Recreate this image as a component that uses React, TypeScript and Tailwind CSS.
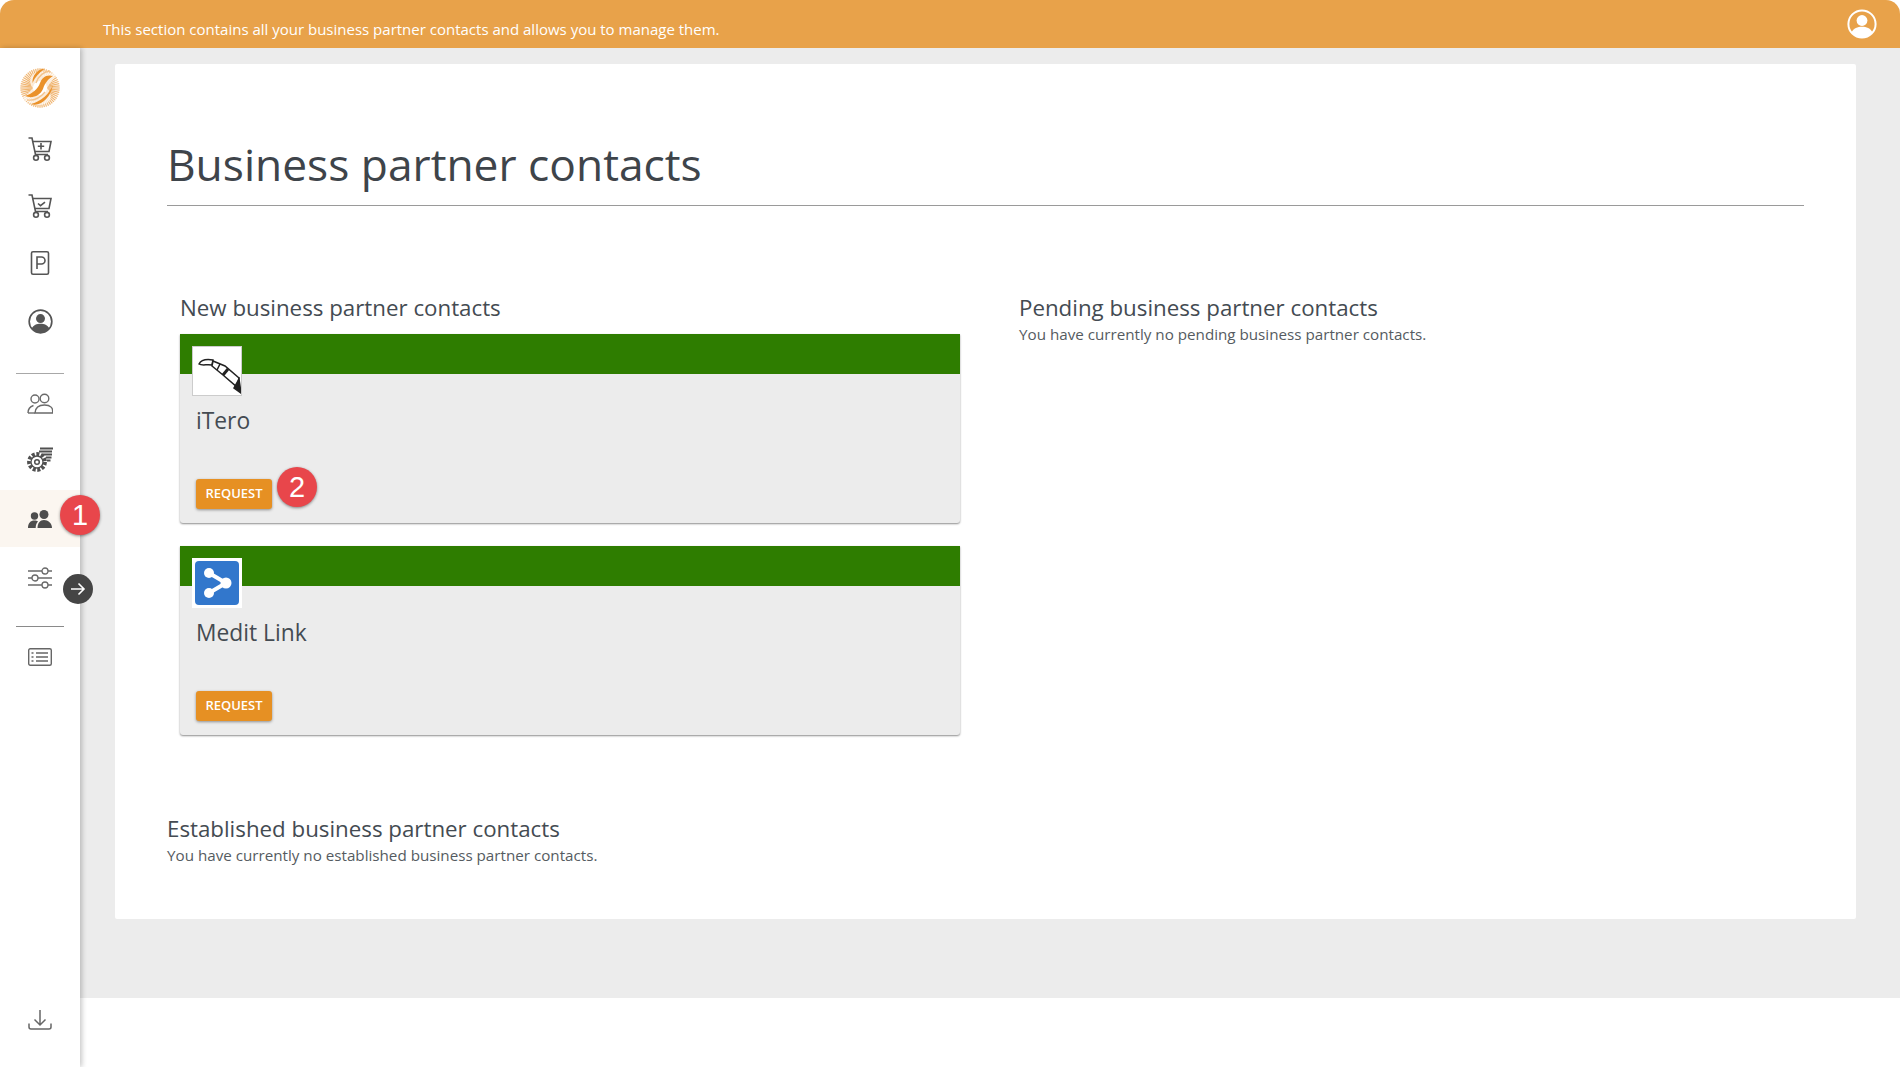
const textFont = "font-['Open_Sans','Noto_Sans',sans-serif]"

function CartPlus() {
  return (
    <svg width="24" height="24" viewBox="0 0 24 24" fill="none" stroke="#555555" strokeWidth="1.600">
      <path d="M0.500 1h3.500l3.500 16.500h12.500" />
      <path d="M4.500 4.500h18.500l-2 10H7" />
      <path d="M13 6v6.500M9.800 9.300h6.400" />
      <circle cx="8" cy="20.800" r="2.400" />
      <circle cx="19" cy="20.800" r="2.400" />
    </svg>
  )
}

function CartCheck() {
  return (
    <svg width="24" height="24" viewBox="0 0 24 24" fill="none" stroke="#555555" strokeWidth="1.600">
      <path d="M0.500 1h3.500l3.500 16.500h12.500" />
      <path d="M4.500 4.500h18.500l-2 10H7" />
      <path d="M10 9.500l2.500 2.200 4.500-3.500" />
      <circle cx="8" cy="20.800" r="2.400" />
      <circle cx="19" cy="20.800" r="2.400" />
    </svg>
  )
}

function ParkIcon() {
  return (
    <svg width="20" height="24" viewBox="0 0 20 24" fill="none" stroke="#555555" strokeWidth="1.600">
      <rect x="1.500" y="0.800" width="17" height="22.400" rx="1.500" />
      <path d="M7 18V6h4.500a3.500 3.500 0 0 1 0 7H7" />
    </svg>
  )
}

function UserCircle({ color, size }: { color: string; size: number }) {
  return (
    <svg width={size} height={size} viewBox="0 0 30 30">
      <circle cx="15" cy="15" r="13.600" fill="none" stroke={color} strokeWidth="2" />
      <circle cx="15" cy="11.500" r="5.400" fill={color} />
      <path d="M4.500 23.500c2-4.500 6-5.800 10.500-5.800s8.500 1.300 10.500 5.800a13.600 13.600 0 0 1-21 0z" fill={color} />
    </svg>
  )
}

function PeopleOutline() {
  return (
    <svg width="26" height="22" viewBox="0 0 26 22" fill="none" stroke="#6a6a6a" strokeWidth="1.400">
      <circle cx="8" cy="6" r="4" />
      <circle cx="17.500" cy="5.500" r="4.300" />
      <path d="M1 20c0-4 2-6.500 5.500-7.500M8 20c.3-5 3.500-8 9.500-8s9 3 8 8z" />
      <path d="M1 20h7" />
    </svg>
  )
}

function GearStack() {
  return (
    <svg width="28" height="26" viewBox="0 0 28 26" fill="none" stroke="#505050">
      <circle cx="11" cy="15" r="8" strokeWidth="3.800" strokeDasharray="3 1.600" />
      <circle cx="11" cy="15" r="6" strokeWidth="1.300" />
      <circle cx="11" cy="15" r="2.300" strokeWidth="1.500" />
      <path d="M14 1.500h13M13 4.500h13M16 7.500h10M20 10.500h5.500M21 13.500h3.500" strokeWidth="2.200" />
    </svg>
  )
}

function PeopleSolid() {
  return (
    <svg width="24" height="18" viewBox="0 0 24 18" fill="#4d4d4d">
      <circle cx="6.500" cy="6" r="3.700" />
      <circle cx="16" cy="4.500" r="4.500" />
      <path d="M0 18c0-5 2.500-7.500 6.500-7.500 1.500 0 2.500.3 3.500 1-1.500 1.500-2.300 3.800-2.300 6.500z" />
      <path d="M9.500 18c0-5 2.500-8 6.500-8s8 3 8 8z" />
    </svg>
  )
}

function Sliders() {
  return (
    <svg width="24" height="22" viewBox="0 0 24 22" fill="none" stroke="#6a6a6a" strokeWidth="1.300">
      <path d="M0 4h14M20 4h4M0 11h4M10 11h14M0 18h14M20 18h4" />
      <circle cx="17" cy="4" r="3" />
      <circle cx="7" cy="11" r="3" />
      <circle cx="17" cy="18" r="3" />
    </svg>
  )
}

function ListBox() {
  return (
    <svg width="24" height="18" viewBox="0 0 24 18" fill="none" stroke="#666666" strokeWidth="1.400">
      <rect x="0.700" y="0.700" width="22.600" height="16.600" rx="1.500" />
      <path d="M8 5h12M8 9h12M8 13h12" />
      <path d="M3.500 5h2M3.500 9h2M3.500 13h2" />
    </svg>
  )
}

function Download() {
  return (
    <svg width="24" height="22" viewBox="0 0 24 22" fill="none" stroke="#666666" strokeWidth="1.500">
      <path d="M12 1v15M6.500 10.500l5.500 5.500 5.500-5.500" />
      <path d="M1 14.500v3.500a2 2 0 0 0 2 2h18a2 2 0 0 0 2-2v-3.500" />
    </svg>
  )
}

function SwirlLogo() {
  const rays = Array.from({ length: 56 }, (_, i) => (i * 360) / 56)
  return (
    <svg width="40" height="40" viewBox="0 0 40 40">
      {rays.map((a) => (
        <path key={a} d="M20 13L20 0.300" stroke="#f0b673" strokeWidth="1.200" transform={`rotate(${a} 20 20)`} />
      ))}
      <path d="M36 7C26 2 15 2 11 9C9 14 11 18 13 20C9 24 7 27 3 30C10 38 24 40 30 32C32 28 30 23 27 20C30 15 33 11 36 7Z" fill="#ffffff" opacity="0.700" />
      <path d="M33 8C26 6 22 10 20 15C18 21 12 26 5 28C12 31 20 28 23 21C25 15 28 11 33 8Z" fill="#ea9129" />
      <path d="M25 0.500C18 1 12 7 12.500 15C15 9 19 5 25 0.500Z" fill="#ea9129" />
      <path d="M11 36C20 39 30 31 33 17C29 26 22 33 11 36Z" fill="#ea9129" />
      <path d="M30 3C23 4 18 9 16 15M7 32C14 33 20 30 25 24" fill="none" stroke="#f3c38c" strokeWidth="1.300" />
    </svg>
  )
}

function IteroIcon() {
  return (
    <svg width="48" height="48" viewBox="0 0 48 48" fill="none" stroke="#222222" strokeWidth="1.500">
      <path d="M6 17C8 13 14 12 20 13L19 18C14 17 9 19 6 17Z" />
      <path d="M20 14L32 19L46 31L44 40L30 28L19 19Z" fill="#ffffff" />
      <path d="M27 17L24 23" strokeWidth="1.500" />
      <path d="M35 22L30 28" strokeWidth="3" />
      <path d="M46 32L48 46L41 41Z" fill="#222222" />
    </svg>
  )
}

function MeditIcon() {
  return (
    <svg width="44" height="44" viewBox="0 0 44 44">
      <rect x="0" y="0" width="44" height="44" rx="4" fill="#3277cc" />
      <path d="M14 12L31 22L14 32" fill="none" stroke="#ffffff" strokeWidth="4" />
      <circle cx="14" cy="12" r="5" fill="#ffffff" />
      <circle cx="31" cy="22" r="5.500" fill="#ffffff" />
      <circle cx="14" cy="32" r="5" fill="#ffffff" />
    </svg>
  )
}

function Badge({ n, className }: { n: number; className: string }) {
  return (
    <div
      className={`absolute w-10 h-10 rounded-full bg-[#e8464b] text-white text-[29px] leading-none flex items-center justify-center shadow-[0_1px_3px_rgba(0,0,0,0.45)] font-['Liberation_Sans',sans-serif] ${className}`}
    >
      {n}
    </div>
  )
}

function PartnerCard({ name, icon, light, badge }: { name: string; icon: React.ReactNode; light: boolean; badge?: boolean }) {
  return (
    <div className="relative w-[780px] h-[189px] bg-[#ececec] rounded-b-[3px] shadow-[0_1px_2px_rgba(0,0,0,0.45)] flex flex-col">
      <div className="h-10 bg-[#2e7d00] shrink-0" />
      <div className={`absolute left-3 top-3 w-[50px] h-[50px] bg-white flex items-center justify-center ${light ? 'border border-[#cccccc]' : ''}`}>
        {icon}
      </div>
      <div className="pl-4 pt-[31px] text-[22.800px] leading-[32px] text-[#444b52]">{name}</div>
      <div className="relative pl-4 mt-[42px]">
        <button className="w-[76px] h-[30px] rounded-[3px] bg-[#e69023] text-white text-[13px] font-semibold flex items-center justify-center shadow-[0_1px_3px_rgba(0,0,0,0.4)]">
          REQUEST
        </button>
        {badge && <Badge n={2} className="left-[97px] -top-[12px]" />}
      </div>
    </div>
  )
}

function NavItem({ children, className }: { children: React.ReactNode; className: string }) {
  return <div className={`flex items-center justify-center ${className}`}>{children}</div>
}

export default function App() {
  return (
    <div className={`w-[1900px] h-[1067px] overflow-hidden bg-white flex flex-col ${textFont}`}>
      <header className="h-[48px] shrink-0 bg-[#e8a24a] rounded-t-[14px] flex items-center justify-between pl-[103px] pr-[23px]">
        <span className="text-white text-[15px] pt-[11px]">
          This section contains all your business partner contacts and allows you to manage them.
        </span>
        <span className="-mt-[1px]">
          <UserCircle color="#ffffff" size={30} />
        </span>
      </header>

      <div className="flex flex-1 min-h-0">
        <aside className="relative z-10 w-[80px] shrink-0 bg-white shadow-[2px_0_5px_rgba(0,0,0,0.22)] flex flex-col items-stretch">
          <NavItem className="h-[40px] mt-[20px]"><SwirlLogo /></NavItem>
          <NavItem className="h-[24px] mt-[29px]"><CartPlus /></NavItem>
          <NavItem className="h-[24px] mt-[33px]"><CartCheck /></NavItem>
          <NavItem className="h-[24px] mt-[33px]"><ParkIcon /></NavItem>
          <NavItem className="h-[26px] mt-[33px]"><UserCircle color="#555555" size={25} /></NavItem>
          <div className="h-px bg-[#a8a8a8] mx-4 mt-[39px]" />
          <NavItem className="h-[22px] mt-[19px]"><PeopleOutline /></NavItem>
          <NavItem className="h-[26px] mt-[32px]"><GearStack /></NavItem>
          <NavItem className="relative h-[57px] mt-[17px] bg-[#fbf6f0]">
            <PeopleSolid />
            <Badge n={1} className="left-[60px] top-[5px]" />
          </NavItem>
          <div className="relative">
            <NavItem className="h-[22px] mt-[20px]"><Sliders /></NavItem>
            <div className="absolute left-[63px] top-[27px] w-[30px] h-[30px] rounded-full bg-[#454545] flex items-center justify-center">
              <svg width="18" height="18" viewBox="0 0 18 18" fill="none" stroke="#ffffff" strokeWidth="1.600">
                <path d="M2 9h13M9.500 3.500L15 9l-5.500 5.500" />
              </svg>
            </div>
          </div>
          <div className="h-px bg-[#8a8a8a] mx-4 mt-[37px]" />
          <NavItem className="h-[18px] mt-[21px]"><ListBox /></NavItem>
          <NavItem className="h-[22px] mt-auto mb-[36px]"><Download /></NavItem>
        </aside>

        <div className="flex-1 min-w-0 flex flex-col">
          <main className="h-[950px] bg-[#ececec] pl-[35px] pt-[16px] pr-[44px]">
            <div className="h-[855px] bg-white rounded-[2px] px-[52px] pt-[72px]">
              <h1 className="text-[44.300px] leading-[56px] font-normal text-[#3e444a] pb-[13px] border-b border-[#9a9a9a]">
                Business partner contacts
              </h1>
              <div className="flex mt-[87px] pl-[13px]">
                <section className="w-[839px] shrink-0">
                  <h2 className="text-[22.300px] leading-[30px] text-[#444b52] font-normal mb-[11px]">New business partner contacts</h2>
                  <div className="flex flex-col gap-[23px]">
                    <PartnerCard name="iTero" icon={<IteroIcon />} light badge />
                    <PartnerCard name="Medit Link" icon={<MeditIcon />} light={false} />
                  </div>
                </section>
                <section>
                  <h2 className="text-[22.300px] leading-[30px] text-[#444b52] font-normal">Pending business partner contacts</h2>
                  <p className="text-[15.200px] leading-[22px] text-[#555b61]">You have currently no pending business partner contacts.</p>
                </section>
              </div>
              <div className="mt-[79px]">
                <h2 className="text-[22.300px] leading-[30px] text-[#444b52] font-normal">Established business partner contacts</h2>
                <p className="text-[15.200px] leading-[22px] text-[#555b61]">You have currently no established business partner contacts.</p>
              </div>
            </div>
          </main>
          <div className="flex-1 bg-white" />
        </div>
      </div>
    </div>
  )
}
